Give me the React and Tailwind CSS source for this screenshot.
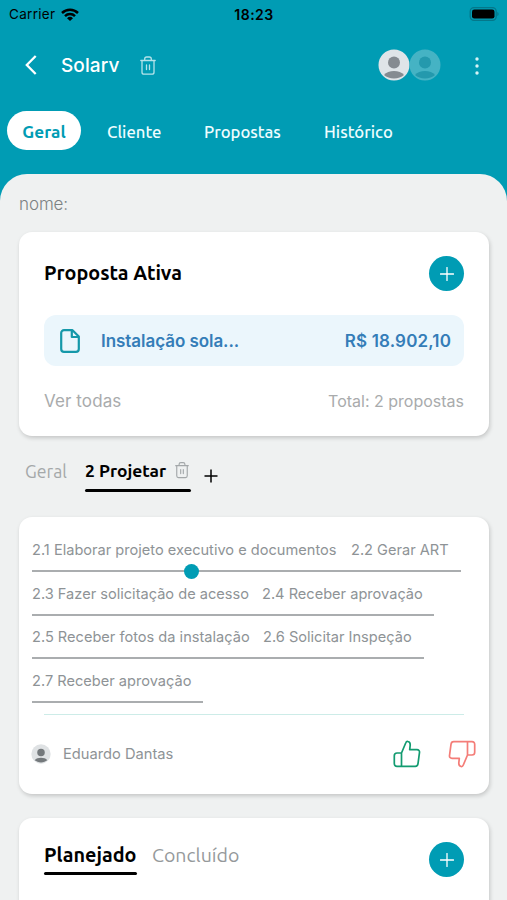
import React from "react";

const inter = "font-['Inter','Liberation_Sans',sans-serif]";
const ubuntu = "font-['Ubuntu','Noto_Sans',sans-serif]";

function Trash({ className }) {
  return (
    <svg viewBox="0 0 16 19" fill="none" stroke="currentColor" strokeWidth="1.3" strokeLinecap="round" strokeLinejoin="round" className={className}>
      <path d="M.8 4.5h14.4M2 4.5v11.7a2 2 0 0 0 2 2h8a2 2 0 0 0 2-2V4.5M4.7 4.3V3a2 2 0 0 1 2-2h2.6a2 2 0 0 1 2 2v1.3M6.5 9v4.6M9.5 9v4.6" />
    </svg>
  );
}

function Avatar({ className, disc, ink }) {
  return (
    <svg viewBox="0 0 32 32" className={className}>
      <circle cx="16" cy="16" r="15.5" fill={disc} />
      <circle cx="16" cy="13.5" r="6" fill={ink} />
      <path d="M6 26c2-2.800 6-4 10-4s8 1.200 10 4c-2.500 2-6 3.500-10 3.500S8.500 28 6 26z" fill={ink} />
    </svg>
  );
}

function AddButton() {
  return (
    <button className="flex size-[35px] items-center justify-center rounded-full bg-[#009cb4] text-white">
      <svg viewBox="0 0 14 14" stroke="currentColor" strokeWidth="1.3" strokeLinecap="round" className="size-3.5">
        <path d="M7 .5v13M.5 7h13" />
      </svg>
    </button>
  );
}

function Thumb({ className }) {
  return (
    <svg viewBox="0 0 28 28" fill="none" stroke="currentColor" strokeWidth="1.7" strokeLinecap="round" strokeLinejoin="round" className={className}>
      <path d="M8.500 13L12.700 3c.5-1.300 1.300-1.800 2.300-1.500 1.600.4 2.300 1.900 2.200 3.600L16.700 9.700h7.300c1.800 0 2.700 1.100 2.500 2.700l-1.500 11.300c-.2 1.700-1.100 2.600-2.700 2.600H4c-1.700 0-2.700-1-2.700-2.700V15.700c0-1.700 1-2.700 2.700-2.700h4.500v13.300" />
    </svg>
  );
}

const steps = [
  [["2.1 Elaborar projeto executivo e documentos", "w-[319px]"], ["2.2 Gerar ART", "w-[110px]"]],
  [["2.3 Fazer solicitação de acesso", "w-[230px]"], ["2.4 Receber aprovação", "w-[172px]"]],
  [["2.5 Receber fotos da instalação", "w-[231px]"], ["2.6 Solicitar Inspeção", "w-[161px]"]],
  [["2.7 Receber aprovação", "w-[171px]"]],
];

const card = "mx-[19px] w-[470px] rounded-[13px] bg-white shadow-[1px_2px_4px_rgba(0,0,0,0.18)]";

export default function App() {
  return (
    <div className={`h-[900px] w-[507px] overflow-hidden bg-[#eff1f1] whitespace-nowrap ${inter}`}>
      <div className="bg-[#009cb4]">
        <div className="grid h-7 grid-cols-3 items-center pr-2 pl-[9px] text-black">
          <div className="flex items-center gap-[6px]">
            <span className="text-[13.5px] tracking-[0.3px]">Carrier</span>
            <svg viewBox="0 0 18 13" className="h-[13px] w-[18px]" fill="none" stroke="currentColor" strokeWidth="2.500">
              <path d="M1 5a11.500 11.500 0 0 1 16 0M4 8.100a7.200 7.200 0 0 1 10 0" />
              <path d="M9 13L6 10.200a4.300 4.300 0 0 1 6 0z" fill="currentColor" stroke="none" />
            </svg>
          </div>
          <span className="text-center text-[14px] font-semibold tracking-[0.5px]">18:23</span>
          <svg viewBox="0 0 30 14" className="h-[14px] w-[30px] justify-self-end">
            <rect x="1.200" y=".7" width="26" height="12.600" rx="3.800" fill="none" stroke="#04778a" strokeWidth="1.300" />
            <rect x="3" y="2.400" width="22.500" height="9.200" rx="2.300" fill="#000" />
            <path d="M28.300 5v4c.8-.3 1.300-1.100 1.300-2s-.5-1.700-1.300-2z" fill="#04778a" />
          </svg>
        </div>

        <div className="flex h-[74px] items-center pl-[25px] text-white">
          <svg viewBox="0 0 12 20" fill="none" stroke="currentColor" strokeWidth="2.300" className="h-5 w-3">
            <path d="M10.700 1L1.800 10l8.900 9" />
          </svg>
          <h1 className="mt-[2px] ml-6 w-[60px] text-[19px] font-medium tracking-[0.1px]">Solarv</h1>
          <Trash className="ml-[19px] h-[19px] w-4 text-[#b5e3ea]" />
          <Avatar className="ml-[222px] size-8" disc="#dfe4e8" ink="#858b91" />
          <Avatar className="-ml-px size-8" disc="#45b3c4" ink="#2499ad" />
          <svg viewBox="0 0 4 18" className="mt-px ml-[34px] h-[18px] w-1" fill="#d6f3f6">
            <circle cx="2" cy="2" r="1.700" />
            <circle cx="2" cy="9" r="1.700" />
            <circle cx="2" cy="16" r="1.700" />
          </svg>
        </div>

        <nav className={`flex h-[72px] items-start pt-[9px] pl-[7px] text-[16.700px] leading-[41px] font-medium text-[#effdff] ${ubuntu}`}>
          <span className="h-[39px] w-[74px] rounded-full bg-white text-center text-[17.200px] font-bold text-[#009cb4]">Geral</span>
          <span className="ml-[26px] w-[97px]">Cliente</span>
          <span className="w-[120px]">Propostas</span>
          <span>Histórico</span>
        </nav>

        <div className="h-[58px] rounded-t-[27px] bg-[#eff1f1] pt-[18px] pl-[19px] text-[17px] leading-6 font-light tracking-[-0.1px] text-[#7c8183]">nome:</div>
      </div>

      <section className={`h-[204px] px-[25px] pt-6 ${card}`}>
        <div className="flex items-center justify-between">
          <h2 className={`text-[19.800px] font-bold text-black ${ubuntu}`}>Proposta Ativa</h2>
          <AddButton />
        </div>
        <div className="mt-6 flex h-[51px] items-center rounded-xl bg-[#ebf6fc] pr-[13px] pl-4 text-[17px] font-semibold text-[#347db8]">
          <svg viewBox="0 0 20 24" fill="none" stroke="#1598a9" strokeWidth="2.200" strokeLinejoin="round" className="h-6 w-5">
            <path d="M4 1.200h8.500L18.800 7.500V20a2.800 2.800 0 0 1-2.800 2.800H4A2.800 2.800 0 0 1 1.200 20V4A2.800 2.800 0 0 1 4 1.200zM11.800 1.500v6.500h6.700" />
          </svg>
          <span className="mt-[2px] ml-[21px] tracking-[-0.05px]">Instalação sola...</span>
          <span className="mt-[2px] ml-auto tracking-[0.150px]">R$ 18.902,10</span>
        </div>
        <div className="mt-[23px] flex items-center justify-between leading-6 text-[#a9abac]">
          <span className="text-[17px] tracking-[0.100px]">Ver todas</span>
          <span className="text-[16px]">Total: 2 propostas</span>
        </div>
      </section>

      <div className={`flex h-[81px] items-start pt-[23px] pl-[25px] ${ubuntu}`}>
        <span className="mt-px w-[60px] text-[17.700px] leading-6 text-[#a4a8a9]">Geral</span>
        <div className="w-[106px]">
          <div className="flex h-[30px] items-start justify-between">
            <span className="text-[17.400px] leading-6 font-bold text-black">2 Projetar</span>
            <Trash className="mt-[2px] mr-[2px] h-[18px] w-[14px] text-[#a3a7a9]" />
          </div>
          <div className="h-[3px] rounded-full bg-black" />
        </div>
        <svg viewBox="0 0 14 14" stroke="#000" strokeWidth="1.500" className="mt-[10px] ml-[13px] h-3.5 w-3.5">
          <path d="M7 .5v13M.5 7h13" />
        </svg>
      </div>

      <section className={`h-[277px] pt-[11px] ${card}`}>
        <div className="relative pl-[13px] text-[14.600px] text-[#8e9396]">
          {steps.map((row, i) => (
            <div key={i} className="flex h-[43.600px]">
              {row.map(([label, width]) => (
                <div key={label} className={`mt-[10px] h-[34.300px] shrink-0 border-b-2 border-[#aaadaf] leading-6 ${width}`}>{label}</div>
              ))}
            </div>
          ))}
          <span className="absolute top-[36px] left-[164.500px] size-[15px] rounded-full bg-[#009cb4]" />
        </div>
        <div className="mx-[25px] mt-[12px] h-px bg-[#cdece8]" />
        <div className="mt-[24px] flex h-[30px] items-center pl-3 text-[14.700px] text-[#8e9396]">
          <Avatar className="size-5" disc="#dfe2e4" ink="#74797c" />
          <span className="ml-3">Eduardo Dantas</span>
          <Thumb className="mr-[27px] ml-auto size-7 text-[#129b70]" />
          <Thumb className="mr-[13px] size-7 rotate-180 text-[#f47d78]" />
        </div>
      </section>

      <section className={`mt-[24px] h-[100px] px-[25px] pt-6 ${card}`}>
        <div className={`flex ${ubuntu}`}>
          <div className="w-[93px]">
            <div className="h-[30px] text-[19.800px] leading-[27px] font-bold text-black">Planejado</div>
            <div className="h-[3px] rounded-full bg-black" />
          </div>
          <span className="ml-[15px] text-[19.500px] leading-[27px] text-[#95999b]">Concluído</span>
          <div className="ml-auto">
            <AddButton />
          </div>
        </div>
      </section>
    </div>
  );
}
